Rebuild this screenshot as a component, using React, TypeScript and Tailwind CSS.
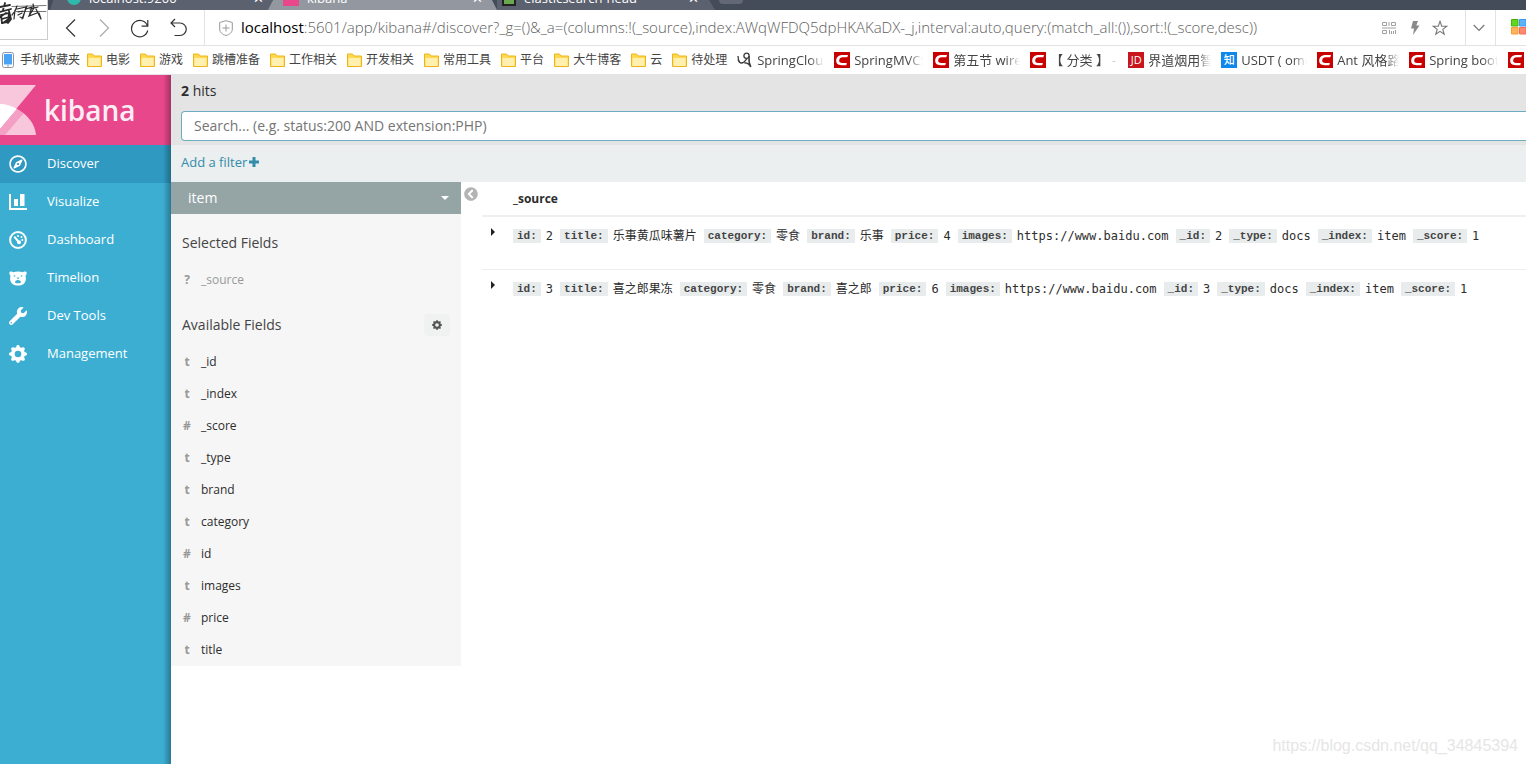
import type { ReactNode } from "react";
import { FaWrench, FaChevronCircleLeft, FaRegCompass } from "react-icons/fa";
import { BsGearFill } from "react-icons/bs";

const ui = "font-['Open_Sans','Noto_Sans_CJK_SC',sans-serif]";

function CsdnIcon() {
  return (
    <svg viewBox="0 0 16 16" className="size-4 shrink-0" aria-hidden="true">
      <rect width="16" height="16" fill="#c90000" />
      <path d="M13.3 5.2 14 3H8.6C4.700 3 2.400 5.100 2.200 8.300 2 11.500 4 13.200 7.600 13.200h4.700l.5-2.300H8.300C6.100 10.900 5 10 5.200 8.200 5.400 6.200 6.700 5.200 8.800 5.200Z" fill="#fff" />
    </svg>
  );
}

function LetterIcon({ children, color }: { children: string; color: string }) {
  return (
    <span className={`flex size-4 shrink-0 items-center justify-center text-[11px] leading-4 font-medium text-white ${color}`}>
      {children}
    </span>
  );
}

function SpringIcon() {
  return (
    <svg viewBox="0 0 16 16" className="size-4 shrink-0" fill="none" stroke="#3a3a3a" strokeWidth="1.300" aria-hidden="true">
      <path d="M1 4c.3 4.500 1.500 6.800 3.400 7 2.500.2 4-2.300 5.600-4.500M1 7.500c1 3 2 3.800 4 3.500" />
      <circle cx="9.500" cy="3.800" r="2.600" />
      <path d="M12 4c-.3 3 .1 7.500 1.800 11-1-2.500-3-4-6.500-4.200" strokeWidth="1.600" />
    </svg>
  );
}

function Folder() {
  return (
    <svg viewBox="0 0 15 14" className="h-3.5 w-[15px] shrink-0" aria-hidden="true">
      <path d="M.5 1h5l1.500 2h7.500v10.500H.5Z" fill="#ffd94f" stroke="#efb41c" />
      <path d="M1.500 5h12v8h-12Z" fill="#fff0b0" />
    </svg>
  );
}

const folders = ["电影", "游戏", "跳槽准备", "工作相关", "开发相关", "常用工具", "平台", "大牛博客", "云", "待处理"];

const sites: { icon: ReactNode; label: string; width: string }[] = [
  { icon: <SpringIcon />, label: "SpringCloud", width: "w-[97px]" },
  { icon: <CsdnIcon />, label: "SpringMVCS", width: "w-[99px]" },
  { icon: <CsdnIcon />, label: "第五节 wirele", width: "w-[97px]" },
  { icon: <CsdnIcon />, label: "【 分类 】 - 随", width: "w-[98px]" },
  { icon: <LetterIcon color="bg-[#c8161d]">JD</LetterIcon>, label: "界道烟用智能", width: "w-[93px]" },
  { icon: <LetterIcon color="bg-[#0f88eb]">知</LetterIcon>, label: "USDT ( omni", width: "w-[96px]" },
  { icon: <CsdnIcon />, label: "Ant 风格路径", width: "w-[92px]" },
  { icon: <CsdnIcon />, label: "Spring boot", width: "w-[99px]" },
  { icon: <CsdnIcon />, label: "Spring", width: "w-[97px]" },
];

function TabStrip() {
  return (
    <div className="flex h-2.5 items-end overflow-hidden bg-[#454c59] pl-[50px] text-[13px] leading-4 text-white">
      <div className="flex h-6 w-[222px] shrink-0 items-center gap-2 bg-[#5b616e] pr-2 pl-[17px] [clip-path:polygon(8px_0,100%_0,100%_100%,0_100%)]">
        <span className="size-3.5 rounded-full bg-[#2fb9ac]" />
        <span className="grow">localhost:9200</span>
        <button type="button" aria-label="Close tab" className="leading-4">✕</button>
      </div>
      <div className="-ml-1 flex h-6 w-[229px] shrink-0 items-center gap-2 bg-[#9297a0] pr-3.5 pl-[15px] [clip-path:polygon(12px_0,calc(100%-12px)_0,100%_100%,0_100%)]">
        <span className="h-4 w-4 bg-[#e8488b]" />
        <span className="grow">kibana</span>
        <button type="button" aria-label="Close tab" className="leading-4">✕</button>
      </div>
      <div className="flex h-6 w-[218px] shrink-0 items-center gap-2 bg-[#5b616e] pr-4 pl-[5px] [clip-path:polygon(0_0,calc(100%-14px)_0,100%_100%,0_100%)]">
        <span className="h-4 w-3.5 border-2 border-[#222] bg-[#69a84f]" />
        <span className="grow">elasticsearch-head</span>
        <button type="button" aria-label="Close tab" className="leading-4">✕</button>
      </div>
      <button type="button" aria-label="New tab" className="mb-1.5 ml-1 h-3 w-6 rounded-sm bg-[#626875]" />
    </div>
  );
}

function Toolbar() {
  return (
    <div className="flex h-9 items-center border-b border-[#e3e3e3] bg-white pl-[62px]">
      <div className="flex shrink-0 items-center text-[#333]">
        <button type="button" aria-label="Back" className="size-5">
          <svg viewBox="0 0 20 20" fill="none" stroke="currentColor" strokeWidth="1.200"><path d="M13 1.500 4.500 10l8.500 8.500" /></svg>
        </button>
        <button type="button" aria-label="Forward" className="ml-4 size-5 text-[#aaa]">
          <svg viewBox="0 0 20 20" fill="none" stroke="currentColor" strokeWidth="1.200"><path d="m2 1.500 8.500 8.500L2 18.500" /></svg>
        </button>
        <button type="button" aria-label="Reload" className="ml-3 size-5">
          <svg viewBox="0 0 20 20" fill="none" stroke="currentColor" strokeWidth="1.200"><path d="M17.500 8A8.200 8.200 0 1 0 17.700 12.500M17.800 2v6.200h-6.200" /></svg>
        </button>
        <button type="button" aria-label="Restore tab" className="ml-5 size-5">
          <svg viewBox="0 0 20 20" fill="none" stroke="currentColor" strokeWidth="1.200"><path d="M5 1 1 5l4 4M1 5h9a6.200 6.200 0 0 1 0 12.500H4.500" /></svg>
        </button>
      </div>
      <div className="ml-3.5 flex h-full min-w-0 grow items-center border-l border-[#e3e3e3] pl-3.5">
        <svg viewBox="0 0 14 16" className="h-4 w-3.5 shrink-0" fill="none" stroke="#999" aria-hidden="true">
          <path d="M7 .7 13.300 2.500v6.500c0 3.500-2.500 5.300-6.300 6.500C3.200 14.300.7 12.500.7 9V2.500ZM7 4.500v7M3.500 8h7" />
        </svg>
        <p className="ml-2 grow truncate pb-0.5 text-[15px] leading-5 font-light text-[#606060]">
          <span className="font-normal text-black">localhost</span>
          :5601/app/kibana#/discover?_g=()&amp;_a=(columns:!(_source),index:AWqWFDQ5dpHKAKaDX-_j,interval:auto,query:(match_all:()),sort:!(_score,desc))
        </p>
        <div className="flex shrink-0 items-center gap-3 pr-[17px] text-[#8a8a8a]">
          <button type="button" aria-label="QR code" className="mr-0.5">
            <svg viewBox="0 0 14 14" className="size-3.5" fill="none" stroke="#a0a0a0"><path d="M.5 1.500h4v3h-4ZM9.500 1.500h4v3h-4ZM.5 9.500h4v3h-4ZM7 1v4M7.500 9v4M9.500 10v3M11.500 10v3M13.500 9v4M0 7h14" /></svg>
          </button>
          <button type="button" aria-label="Turbo mode">
            <svg viewBox="0 0 10 14" className="h-3.5 w-2.5" fill="#8a8a8a"><path d="M3 0h5L6.300 4.500H9.500L3 14l1-6.500H1Z" /></svg>
          </button>
          <button type="button" aria-label="Add bookmark">
            <svg viewBox="0 0 16 16" className="size-4" fill="none" stroke="#777" strokeWidth="1.100"><path d="m8 1.300 1.700 4.800 5.100.1-4 3.200 1.400 4.900L8 11.400l-4.200 2.900 1.400-4.900-4-3.200 5.100-.1Z" /></svg>
          </button>
        </div>
      </div>
      <button type="button" aria-label="More addresses" className="flex h-full w-[31px] shrink-0 items-center justify-center border-x border-[#e3e3e3] pr-1">
        <svg viewBox="0 0 12 8" className="h-2 w-3" fill="none" stroke="#777" strokeWidth="1.200"><path d="m.7 1 5.300 5.500L11.300 1" /></svg>
      </button>
      <div className="flex h-full w-[30px] shrink-0 items-center overflow-hidden pb-0.5 pl-[15px]">
        <svg viewBox="0 0 16 16" className="size-4 shrink-0" aria-hidden="true">
          <path d="M.5.500h6.500v6.500H.5Z" fill="#62d51c" stroke="#46b00d" />
          <path d="M8.500.500h6.500v6.500H8.500Z" fill="#5cb2fb" stroke="#3b9af0" />
          <path d="M.5 8.500h6.500v6.500H.5Z" fill="#ffb45c" stroke="#f79b34" />
          <path d="M8.500 8.500h6.500v6.500H8.500Z" fill="#ff8a70" stroke="#f56e52" />
        </svg>
      </div>
    </div>
  );
}

function Bookmarks() {
  return (
    <nav aria-label="Bookmarks" className="flex h-[29px] items-center overflow-hidden border-b border-[#e3e3e3] bg-white pl-0.5 text-xs leading-5 whitespace-nowrap text-[#444]">
      <a href="#mobile" className="flex shrink-0 items-center gap-1.5">
        <svg viewBox="0 0 12 16" className="h-4 w-3" aria-hidden="true">
          <rect x=".5" y=".5" width="11" height="15" rx="2" fill="#fff" stroke="#8a94a5" />
          <rect x="2" y="2" width="8" height="10.500" fill="#4ba3f5" />
          <rect x="5" y="13.300" width="2" height="1" fill="#8a94a5" />
        </svg>
        手机收藏夹
      </a>
      <div className="ml-[7px] flex shrink-0 gap-2.5">
        {folders.map((name) => (
          <a key={name} href="#folder" className="flex items-center gap-1">
            <Folder />
            {name}
          </a>
        ))}
      </div>
      <div className="ml-2.5 flex shrink-0">
        {sites.map((site, i) => (
          <a key={i} href="#site" className={`flex shrink-0 items-center gap-1 pr-2.5 ${site.width}`}>
            {site.icon}
            <span className="min-w-0 grow overflow-hidden text-[13px] [mask-image:linear-gradient(to_right,black_78%,transparent)]">{site.label}</span>
          </a>
        ))}
      </div>
    </nav>
  );
}

function DashboardIcon() {
  return (
    <svg viewBox="0 0 18 18" className="size-[18px]" fill="none" stroke="#fff" aria-hidden="true">
      <circle cx="9" cy="9" r="7.900" strokeWidth="2" />
      <path d="m5.700 6.200 4 4.800" strokeWidth="2" strokeLinecap="round" />
      <circle cx="10" cy="11.200" r="2" fill="#fff" stroke="none" />
      <g fill="#fff" stroke="none">
        <circle cx="9" cy="5" r="1" />
        <circle cx="12.500" cy="6" r="1" />
        <circle cx="13.300" cy="9" r="1" />
      </g>
    </svg>
  );
}

function ChartIcon() {
  return (
    <svg viewBox="0 0 18 16" className="h-4 w-[18px]" fill="#fff" aria-hidden="true">
      <path d="M0 0h2v14h16v2H0ZM5 5h4v7H5ZM11 0h4.500v12H11Z" />
    </svg>
  );
}

function BearIcon() {
  return (
    <svg viewBox="0 0 18 15" className="h-[15px] w-[18px]" aria-hidden="true">
      <path d="M.3 1.800C.3.500 3 .2 4.200 1.200 7 .4 11 .4 13.800 1.200 15 .2 17.700.5 17.700 1.800c0 1.400-.7 2.300-1.200 3 .8 3 .3 5.700-1 7.200C14 13.800 11.500 14.600 9 14.600S4 13.800 2.500 12c-1.300-1.500-1.800-4.200-1-7.200C1 4.100.3 3.200.3 1.800Z" fill="#fff" />
      <g fill="#3caed2">
        <circle cx="5.500" cy="5" r=".8" />
        <circle cx="12.500" cy="5" r=".8" />
        <path d="M7.500 6.500h3L9 8.200ZM6 11.300c0-1.300 1.300-2.300 3-2.300s3 1 3 2.300-6 1.300-6 0Z" />
      </g>
    </svg>
  );
}

function PlusIcon() {
  return (
    <svg viewBox="0 0 10 10" className="size-2.5" fill="currentColor" aria-hidden="true">
      <path d="M3.500 0h3v3.500H10v3H6.500V10h-3V6.500H0v-3h3.500Z" />
    </svg>
  );
}

const navItems: { label: string; icon: ReactNode; active?: boolean }[] = [
  { label: "Discover", icon: <FaRegCompass className="size-[18px]" />, active: true },
  { label: "Visualize", icon: <ChartIcon /> },
  { label: "Dashboard", icon: <DashboardIcon /> },
  { label: "Timelion", icon: <BearIcon /> },
  { label: "Dev Tools", icon: <FaWrench className="size-[18px]" /> },
  { label: "Management", icon: <BsGearFill className="size-[18px]" /> },
];

function Sidebar() {
  return (
    <aside className="relative w-[171px] shrink-0 bg-[#3caed2]">
      <div className="flex h-[70px] items-center bg-[#e8488b]">
        <svg viewBox="0 0 36 50" className="h-[50px] w-9 shrink-0" aria-hidden="true">
          <path d="M0 0h36L0 43.500Z" fill="#f8c7dc" />
          <path d="M0 19c6 0 12 2 17 5L0 44Z" fill="#fff" />
          <path d="M17 24c11 6 18 15 19 26H0v-6Z" fill="#f8c7dc" />
          <path d="M17 24l6.500 4.500L5 50H0v-6Z" fill="#f3a0c4" />
        </svg>
        <span className="ml-2 text-[28px] leading-10 font-semibold text-[#fdedf4]">kibana</span>
      </div>
      <nav aria-label="Main">
        {navItems.map((item) => (
          <a
            key={item.label}
            href="#nav"
            className={`flex h-[38px] items-center gap-5 pl-[9px] text-[13px] leading-5 text-white ${item.active ? "bg-[#2f99c1]" : ""}`}
          >
            <span className="flex w-[18px] justify-center">{item.icon}</span>
            <span className="pb-0.5">{item.label}</span>
          </a>
        ))}
      </nav>
      <div className="pointer-events-none absolute inset-y-0 right-0 w-2 bg-linear-to-r from-transparent to-black/30" />
    </aside>
  );
}

const fields = [
  ["t", "_id"],
  ["t", "_index"],
  ["#", "_score"],
  ["t", "_type"],
  ["t", "brand"],
  ["t", "category"],
  ["#", "id"],
  ["t", "images"],
  ["#", "price"],
  ["t", "title"],
];

function FieldRow({ type, name, muted }: { type: string; name: string; muted?: boolean }) {
  return (
    <li className={`flex h-8 items-center gap-[9px] pl-[11px] text-xs leading-5 ${muted ? "text-[#999]" : "text-[#2d2d2d]"}`}>
      <span className="w-2.5 text-center font-bold text-[#999]">{type}</span>
      {name}
    </li>
  );
}

function FieldPanel() {
  return (
    <section aria-label="Fields" className="w-[290px] shrink-0 self-start bg-[#f6f6f6] text-sm leading-5 text-[#444]">
      <button type="button" className="flex h-8 w-full items-center justify-between bg-[#95a5a6] pr-3 pl-[17px] text-white">
        item
        <svg viewBox="0 0 8 4" className="h-1 w-2" fill="#fff" aria-hidden="true"><path d="M0 0h8L4 4Z" /></svg>
      </button>
      <h2 className="mt-[19px] pl-[11px]">Selected Fields</h2>
      <ul className="mt-[11px]">
        <FieldRow type="?" name="_source" muted />
      </ul>
      <div className="mt-[18px] flex h-[22px] items-center justify-between pr-[11px] pl-[11px]">
        <h2>Available Fields</h2>
        <button type="button" aria-label="Field settings" className="flex h-[22px] w-[26px] items-center justify-center rounded-sm bg-[#f0f1f1] text-[#555]">
          <BsGearFill className="size-2.5" />
        </button>
      </div>
      <ul className="mt-2.5">
        {fields.map(([type, name]) => (
          <FieldRow key={name} type={type} name={name} />
        ))}
      </ul>
    </section>
  );
}

const hits = [
  { id: "2", title: "乐事黄瓜味薯片", category: "零食", brand: "乐事", price: "4" },
  { id: "3", title: "喜之郎果冻", category: "零食", brand: "喜之郎", price: "6" },
].map((h) => ({ ...h, images: "https://www.baidu.com", _id: h.id, _type: "docs", _index: "item", _score: "1" }));

function HitTable() {
  return (
    <table className="w-full border-collapse text-left">
      <thead>
        <tr className="h-[34px] border-b-2 border-[#ebefef]">
          <th aria-label="Expand" className="w-[31px]" />
          <th className="text-xs leading-5 font-bold text-[#2d2d2d]">_source</th>
        </tr>
      </thead>
      <tbody>
        {hits.map((hit) => (
          <tr key={hit.id} className="h-[53px] border-b border-[#ebefef] last:border-b-0">
            <td className="pt-[11px] pl-[9px] align-top">
              <button type="button" aria-label="Expand row" className="block">
                <svg viewBox="0 0 4 8" className="h-2 w-1" fill="#222"><path d="M0 0l4 4-4 4Z" /></svg>
              </button>
            </td>
            <td className="pt-3 align-top">
              <dl className="flex flex-wrap gap-x-[7px] font-['DejaVu_Sans_Mono','Noto_Sans_CJK_SC',monospace] text-xs leading-3.5 text-[#2d2d2d]">
                {Object.entries(hit).map(([key, value]) => (
                  <div key={key} className="flex h-3.5 items-center gap-[5px]">
                    <dt className="bg-[#e8eced] px-1 font-['Liberation_Mono',monospace] text-[11px] leading-3.5 font-bold text-[#444]">{key}:</dt>
                    <dd>{value}</dd>
                  </div>
                ))}
              </dl>
            </td>
          </tr>
        ))}
      </tbody>
    </table>
  );
}

export default function App() {
  return (
    <div className={`relative flex min-h-screen flex-col overflow-hidden bg-white ${ui}`}>
      <header>
        <TabStrip />
        <Toolbar />
        <Bookmarks />
        <div className="absolute top-0 left-0 h-10 w-12 border-r border-b border-[#ccc] bg-white">
          <svg viewBox="0 0 47 39" className="h-[39px] w-[47px]" fill="none" stroke="#2b2b2b" strokeLinecap="round" aria-hidden="true">
            <path d="M12 6.500 46 5.500M16 11.500h30" strokeWidth=".8" stroke="#555" />
            <path d="M0 7l10-2M5 3 3 10M0 12l11-3M1 15l8-2-1 9-6 1-1-8M2 19l7-2M9 11l2 8-3 4M0 17l6-4M3 23l7-5" strokeWidth="1.800" />
            <path d="M17 6c-1 4-3 7-5 9M15 10l-1 9M17 9l9-2-3 11-3-1M18 12l5-1M18 15l4-2M27 6l-5 13M26 9l6-2-3 9M33 4l1 4M30 9l8-2M34 8l-5 8 8-3M36 9l5 10M39 13l2 6" strokeWidth="1.200" />
          </svg>
        </div>
      </header>
      <div className="flex grow">
        <Sidebar />
        <main className="flex min-w-0 grow flex-col">
          <div className="h-[70px] bg-[#e4e4e4] pt-1.5 pl-2.5">
            <p className="text-sm leading-5 text-[#2d2d2d]"><strong>2</strong> hits</p>
            <input
              type="text"
              aria-label="Search"
              placeholder="Search... (e.g. status:200 AND extension:PHP)"
              className="mt-2.5 block h-[30px] w-full rounded-l border border-r-0 border-[#6eadc1] bg-white px-3 pb-0.5 text-sm leading-5 text-[#2d2d2d] outline-none placeholder:text-[#757575]"
            />
          </div>
          <div className="flex h-[37px] items-center bg-[#ebefef] pb-[3px] pl-2.5">
            <a href="#filter" className="flex items-center gap-0.5 text-[13px] leading-5 text-[#328caa]">
              Add a filter <PlusIcon />
            </a>
          </div>
          <div className="flex grow">
            <FieldPanel />
            <button type="button" aria-label="Collapse fields" className="mt-[5px] ml-[3px] size-3.5 shrink-0 text-[#b4b4b4]">
              <FaChevronCircleLeft className="size-3.5" />
            </button>
            <div className="ml-1 min-w-0 grow">
              <HitTable />
            </div>
          </div>
        </main>
      </div>
      <p className="absolute right-2 bottom-1.5 font-['Liberation_Sans',sans-serif] text-base leading-6 text-[#e6e6e6]">https://blog.csdn.net/qq_34845394</p>
    </div>
  );
}
